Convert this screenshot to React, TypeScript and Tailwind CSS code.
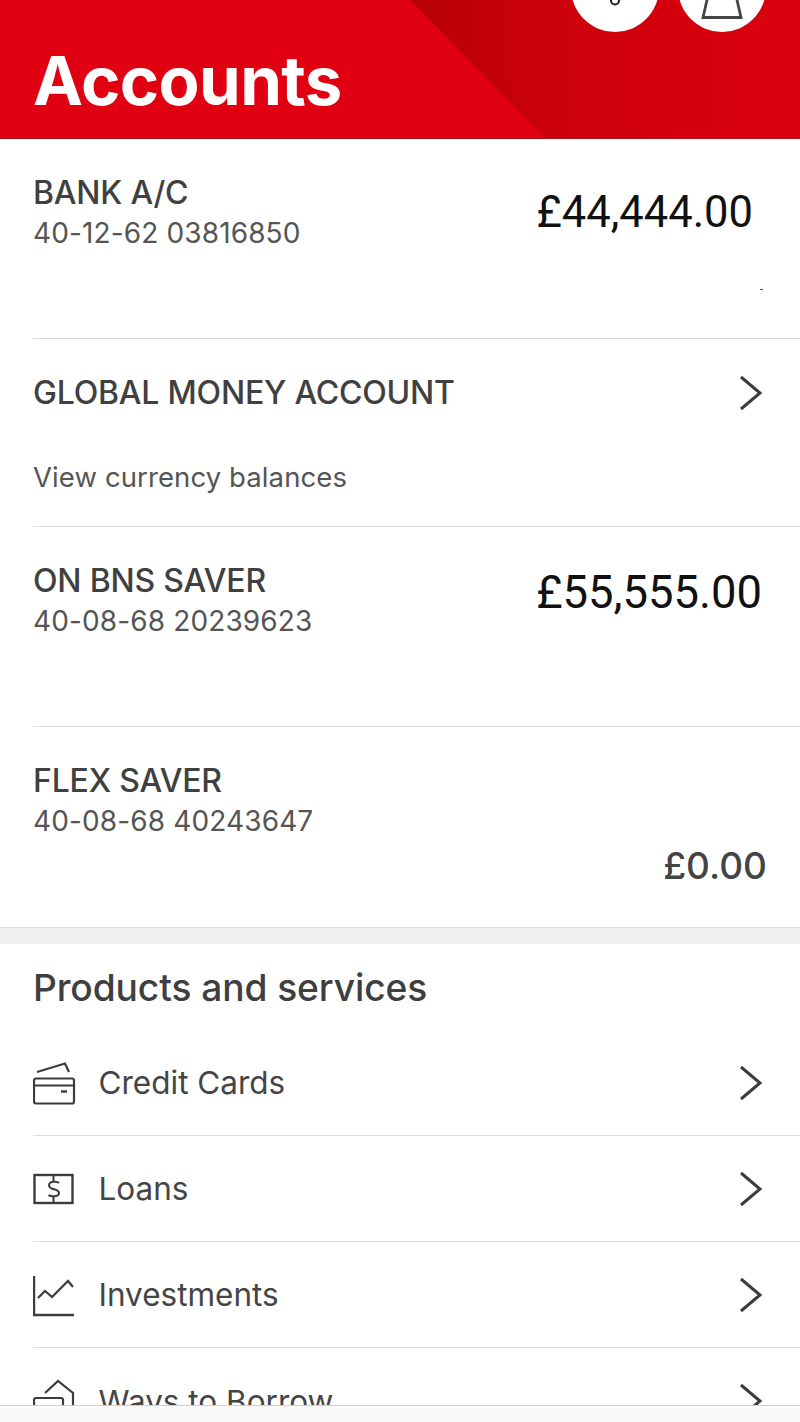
import React from "react";

function Chevron({ className = "" }: { className?: string }) {
  return (
    <svg width="24" height="36" viewBox="0 0 24 36" fill="none" className={className}>
      <path d="M2 2 L21 18 L2 34" stroke="#3c3c3c" strokeWidth="3" />
    </svg>
  );
}

function CardIcon() {
  return (
    <svg width="44" height="44" viewBox="0 0 44 44" fill="none" stroke="#3c3c3c" strokeWidth="2.200">
      <path d="M4 11 L32 2.500 L36 11" />
      <rect x="1" y="17.500" width="40" height="25" rx="2" />
      <path d="M1 24.500 H41" />
      <path d="M28 30.500 H34" strokeWidth="2.500" />
    </svg>
  );
}

function LoanIcon() {
  return (
    <svg width="44" height="34" viewBox="0 0 44 34" fill="none" stroke="#3c3c3c" strokeWidth="2.400">
      <rect x="1.500" y="3" width="38" height="28" />
      <path d="M26 11 C24 9 16 9 16 13.500 C16 18.500 26 16 26 21 C26 25 18 25 15.500 23" strokeWidth="2" />
      <path d="M20.500 3 V9 M20.500 25 V31" strokeWidth="2" />
    </svg>
  );
}

function ChartIcon() {
  return (
    <svg width="44" height="44" viewBox="0 0 44 44" fill="none" stroke="#3c3c3c" strokeWidth="2.200">
      <path d="M1 3 V42 H41" strokeWidth="2.400" />
      <path d="M5 25 L12 18 L19 24 L35 8 L40 14" />
    </svg>
  );
}

function BorrowIcon() {
  return (
    <svg width="44" height="44" viewBox="0 0 44 44" fill="none" stroke="#3c3c3c" strokeWidth="2.200">
      <path d="M12 14 L25 2 L40 14 V30" />
      <rect x="1" y="19" width="29" height="22" rx="2" />
    </svg>
  );
}

function Account({ name, sort, amount, h, amountClass }: { name: string; sort: string; amount: string; h: string; amountClass: string }) {
  return (
    <div className={`flex justify-between ${h}`}>
      <div className="pt-[34px]">
        <p className="text-[32px] leading-[40px] text-[#404040] font-medium tracking-[-0.2px]">{name}</p>
        <p className="text-[28px] leading-[40px] text-[#555] tracking-[0.13px]">{sort}</p>
      </div>
      <div className={amountClass}>{amount}</div>
    </div>
  );
}

function Product({ icon, label, last }: { icon: React.ReactNode; label: string; last?: boolean }) {
  return (
    <div className={`h-[106px] flex items-center shrink-0 ${last ? "" : "border-b border-[#dcdcdc]"}`}>
      <div className="w-[65.500px] flex items-center">{icon}</div>
      <span className="flex-1 text-[31.500px] leading-[40px] pt-[1px] text-[#454545]">{label}</span>
      <Chevron className="mr-[37px]" />
    </div>
  );
}

export default function App() {
  return (
    <div className="w-[800px] h-[1422px] bg-white flex flex-col overflow-hidden font-['Inter',sans-serif]">
      <div className="h-[1405px] overflow-hidden shrink-0">
        <header className="relative h-[139px] bg-[#e00012] border-b border-[#a8141f] overflow-hidden flex items-end px-[33px] pb-[19px]">
          <div className="absolute inset-0 bg-gradient-to-r from-[#b80008] from-[52%] via-[#cb000a] via-[68%] to-[#dc000f] [clip-path:polygon(410px_0,800px_0,800px_138px,545px_138px)]" />
          <h1 className="relative text-[67px] leading-[76px] font-bold text-white tracking-[-0.6px]">Accounts</h1>
          <div className="absolute left-[571px] top-[-56px] w-[88px] h-[88px] rounded-full bg-white flex items-end justify-center pb-[26px]">
            <svg width="12" height="7" viewBox="0 0 12 7" fill="none" stroke="#222" strokeWidth="2">
              <path d="M2 0 V1.500 A4 4 0 0 0 10 1.500 V0" />
            </svg>
          </div>
          <div className="absolute left-[678px] top-[-56px] w-[88px] h-[88px] rounded-full bg-white flex items-end justify-center pb-[13px]">
            <svg width="44" height="19" viewBox="0 0 44 19" fill="none" stroke="#444" strokeWidth="2.800">
              <path d="M7 0 L3 17.500 H41 L37 0" />
            </svg>
          </div>
        </header>

        <section className="pl-[33px]">
          <div className="relative border-b border-[#dcdcdc]">
            <Account
              name="BANK A/C"
              sort="40-12-62 03816850"
              amount="£44,444.00"
              h="h-[199px]"
              amountClass="font-['Roboto',sans-serif] text-[43.500px] leading-[52px] text-[#111] pt-[48px] pr-[47px]"
            />
            <div className="absolute right-[37px] top-[150px] w-[3px] h-[1px] bg-[#555]" />
          </div>
          <div className="h-[188px] border-b border-[#dcdcdc] flex flex-col">
            <div className="flex items-center justify-between pt-[34px]">
              <p className="text-[32px] leading-[40px] text-[#404040] font-medium tracking-[-0.2px]">GLOBAL MONEY ACCOUNT</p>
              <Chevron className="mr-[37px]" />
            </div>
            <p className="text-[27.500px] leading-[40px] text-[#555] mt-[44px] tracking-[0.1px]">View currency balances</p>
          </div>
          <div className="border-b border-[#dcdcdc]">
            <Account
              name="ON BNS SAVER"
              sort="40-08-68 20239623"
              amount="£55,555.00"
              h="h-[199px]"
              amountClass="font-['Roboto',sans-serif] text-[45.400px] leading-[52px] text-[#111] pt-[40px] pr-[38px]"
            />
          </div>
          <div>
            <Account
              name="FLEX SAVER"
              sort="40-08-68 40243647"
              amount="£0.00"
              h="h-[200px]"
              amountClass="text-[37px] leading-[46px] text-[#444] font-medium pt-[116px] pr-[33px]"
            />
          </div>
        </section>

        <div className="h-[17px] bg-[#efefef] border-t border-[#dedede]" />

        <section className="pl-[33px]">
          <h2 className="text-[37.200px] leading-[46px] font-medium text-[#3f3f3f] pt-[21px] pb-[17px] tracking-[-0.1px]">Products and services</h2>
          <div className="flex flex-col mt-[2px]">
            <Product icon={<CardIcon />} label="Credit Cards" />
            <Product icon={<LoanIcon />} label="Loans" />
            <Product icon={<ChartIcon />} label="Investments" />
            <Product icon={<BorrowIcon />} label="Ways to Borrow" last />
          </div>
        </section>
      </div>
      <div className="flex-1 bg-[#fafafa] border-t border-[#d0d0d0]" />
    </div>
  );
}
